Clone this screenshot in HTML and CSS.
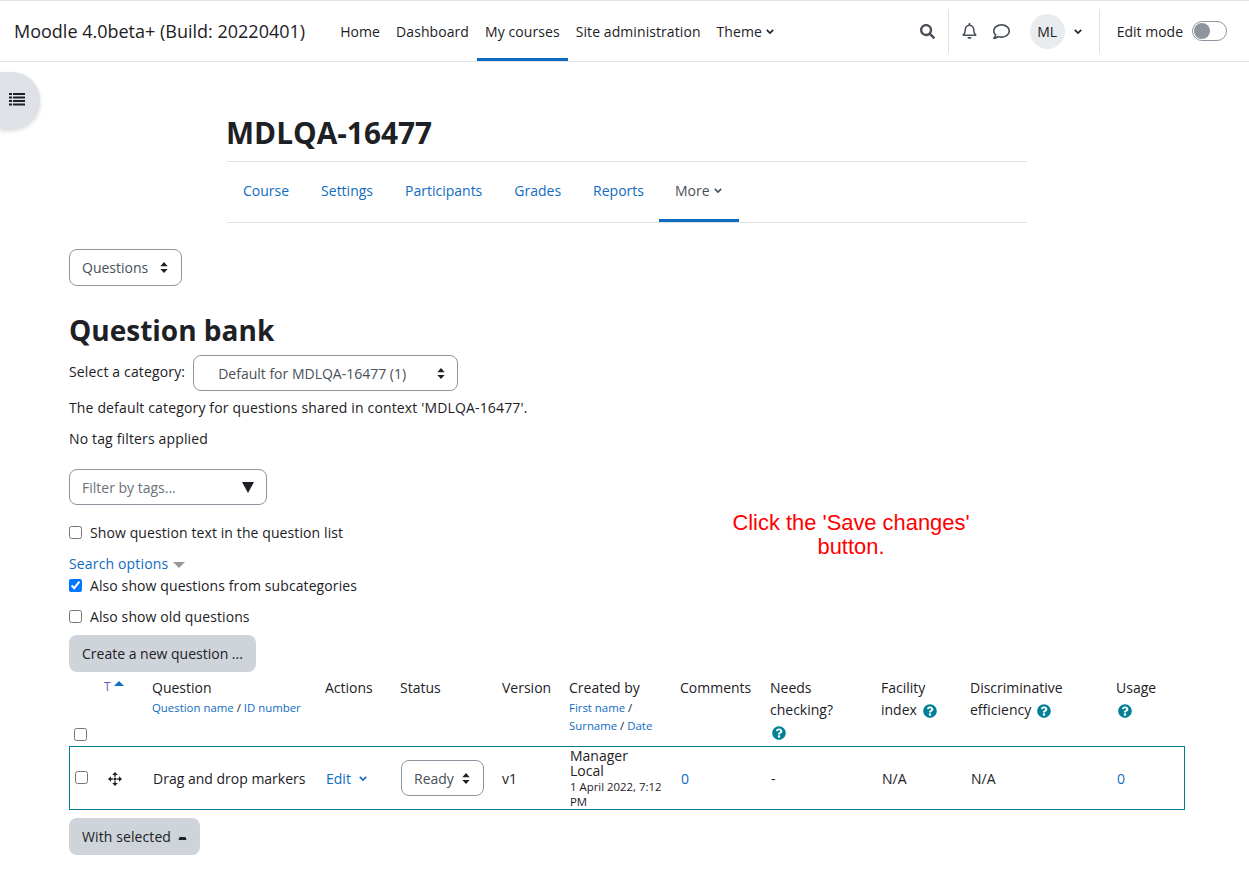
FILE: index.html
```html
<!DOCTYPE html>
<html lang="en">
<head>
  <meta charset="UTF-8" />
  <title>Question bank</title>
  <link rel="stylesheet" href="styles.css">
</head>
<body>

<nav class="navbar">
  <span class="brand">Moodle 4.0beta+ (Build: 20220401)</span>
  <ul class="nav-links">
    <li>Home</li>
    <li>Dashboard</li>
    <li class="active">My courses</li>
    <li>Site administration</li>
    <li>Theme <svg class="chev" viewBox="0 0 10 6"><path d="M1 1l4 4 4-4"/></svg></li>
  </ul>
  <div class="nav-right">
    <svg class="icon search-icon" viewBox="0 0 512 512"><path d="M505 442.7L405.3 343c-4.5-4.5-10.6-7-17-7H372c27.6-35.3 44-79.7 44-128C416 93.1 322.9 0 208 0S0 93.1 0 208s93.1 208 208 208c48.3 0 92.7-16.4 128-44v16.3c0 6.4 2.5 12.5 7 17l99.7 99.7c9.4 9.4 24.6 9.4 33.9 0l28.3-28.3c9.4-9.4 9.4-24.6.1-34zM208 336c-70.7 0-128-57.2-128-128 0-70.7 57.2-128 128-128 70.7 0 128 57.2 128 128 0 70.7-57.2 128-128 128z"/></svg>
    <span class="nav-sep sep-search"></span>
    <svg class="icon bell-icon" viewBox="0 0 448 512"><path d="M439.39 362.29c-19.32-20.76-55.47-51.99-55.47-154.29 0-77.7-54.48-139.9-127.94-155.16V32c0-17.67-14.32-32-31.98-32s-31.98 14.33-31.98 32v20.84C118.56 68.1 64.08 130.3 64.08 208c0 102.3-36.15 133.53-55.47 154.29-6 6.45-8.66 14.16-8.61 21.71.11 16.4 12.98 32 32.1 32h383.8c19.12 0 32-15.6 32.1-32 .05-7.55-2.61-15.27-8.61-21.71zM67.53 368c21.22-27.97 44.42-74.33 44.53-159.42 0-.2-.06-.38-.06-.58 0-61.86 50.14-112 112-112s112 50.14 112 112c0 .2-.06.38-.06.58.11 85.1 23.31 131.46 44.53 159.42H67.53zM224 512c35.32 0 63.97-28.65 63.97-64H160.03c0 35.35 28.65 64 63.97 64z"/></svg>
    <svg class="icon comment-icon" viewBox="0 0 512 512"><path d="M256 32C114.6 32 0 125.1 0 240c0 47.6 19.9 91.2 52.9 126.3C38 405.7 7 439.1 6.5 439.5c-6.6 7-8.4 17.2-4.6 26S14.4 480 24 480c61.5 0 110-25.7 139.1-46.3C192 442.8 223.2 448 256 448c141.4 0 256-93.1 256-208S397.4 32 256 32zm0 368c-26.7 0-53.1-4.1-78.4-12.1l-22.7-7.2-19.5 13.8c-14.3 10.1-33.9 21.4-57.5 29 7.3-12.1 14.4-25.7 19.9-40.2l10.6-28.1-20.6-21.8C69.7 314.1 48 282.2 48 240c0-88.2 93.3-160 208-160s208 71.8 208 160-93.3 160-208 160z"/></svg>
    <span class="avatar">ML</span>
    <svg class="chev user-chev" viewBox="0 0 10 6"><path d="M1 1l4 4 4-4"/></svg>
    <span class="nav-sep sep-user"></span>
    <span class="edit-label">Edit mode</span>
    <span class="toggle"><span class="knob"></span></span>
  </div>
</nav>

<button class="drawer-toggle" aria-label="Open course index">
  <svg viewBox="0 0 16 14"><path d="M0 1h3v2H0zM4 1h12v2H4zM0 4.500h3v2H0zM4 4.500h12v2H4zM0 8h3v2H0zM4 8h12v2H4zM0 11.500h3v2H0zM4 11.500h12v2H4z"/></svg>
</button>

<div class="course-head">
  <h1>MDLQA-16477</h1>
  <ul class="tabs">
    <li>Course</li>
    <li>Settings</li>
    <li>Participants</li>
    <li>Grades</li>
    <li>Reports</li>
    <li class="active">More <svg class="chev" viewBox="0 0 10 6"><path d="M1 1l4 4 4-4"/></svg></li>
  </ul>
</div>

<main class="content">
  <span class="select select-questions">Questions
    <svg class="updown" viewBox="0 0 8 12"><path d="M4 0l4 4.500H0zM4 12L0 7.500h8z"/></svg>
  </span>

  <h2>Question bank</h2>

  <div class="category-row">
    <label>Select a category:</label>
    <span class="select select-category">Default for MDLQA-16477 (1)
      <svg class="updown" viewBox="0 0 8 12"><path d="M4 0l4 4.500H0zM4 12L0 7.500h8z"/></svg>
    </span>
  </div>
  <p class="info">The default category for questions shared in context 'MDLQA-16477'.</p>
  <p class="info tags-info">No tag filters applied</p>

  <div class="filter-tags">
    <span>Filter by tags...</span>
    <svg viewBox="0 0 12 11"><path d="M0 0h12L6 11z"/></svg>
  </div>

  <label class="check check-text"><input type="checkbox"> Show question text in the question list</label>
  <div class="search-options"><a href="#">Search options</a> <span class="caret"></span></div>
  <label class="check check-sub"><input type="checkbox" checked> Also show questions from subcategories</label>
  <label class="check check-old"><input type="checkbox"> Also show old questions</label>

  <button class="btn">Create a new question ...</button>

  <table class="qbank">
    <colgroup>
      <col class="c-check"><col class="c-type"><col class="c-name"><col class="c-actions"><col class="c-status"><col class="c-version"><col class="c-created"><col class="c-comments"><col class="c-needs"><col class="c-facility"><col class="c-disc"><col class="c-usage">
    </colgroup>
    <thead>
      <tr>
        <th class="head-check"><input type="checkbox"></th>
        <th class="head-type"><a href="#" class="visited">T</a><span class="sort-up"></span></th>
        <th>Question<small><a href="#">Question name</a> / <a href="#">ID number</a></small></th>
        <th>Actions</th>
        <th>Status</th>
        <th>Version</th>
        <th>Created by<small><a href="#">First name</a> / <a href="#">Surname</a> / <a href="#">Date</a></small></th>
        <th>Comments</th>
        <th>Needs checking?
          <svg class="help help-block" viewBox="0 0 512 512"><path d="M504 256c0 136.997-111.043 248-248 248S8 392.997 8 256C8 119.083 119.043 8 256 8s248 111.083 248 248zM262.655 90c-54.497 0-89.255 22.957-116.549 63.758-3.536 5.286-2.353 12.415 2.715 16.258l34.699 26.31c5.205 3.947 12.621 3.008 16.665-2.122 17.864-22.658 30.113-35.797 57.303-35.797 20.429 0 45.698 13.148 45.698 32.958 0 14.976-12.363 22.667-32.534 33.976C247.128 238.528 216 254.941 216 296v4c0 6.627 5.373 12 12 12h56c6.627 0 12-5.373 12-12v-1.333c0-28.462 83.186-29.647 83.186-106.667 0-58.002-60.165-102-116.531-102zM256 338c-25.365 0-46 20.635-46 46 0 25.364 20.635 46 46 46s46-20.636 46-46c0-25.365-20.635-46-46-46z"/></svg>
        </th>
        <th>Facility index
          <svg class="help" viewBox="0 0 512 512"><path d="M504 256c0 136.997-111.043 248-248 248S8 392.997 8 256C8 119.083 119.043 8 256 8s248 111.083 248 248zM262.655 90c-54.497 0-89.255 22.957-116.549 63.758-3.536 5.286-2.353 12.415 2.715 16.258l34.699 26.31c5.205 3.947 12.621 3.008 16.665-2.122 17.864-22.658 30.113-35.797 57.303-35.797 20.429 0 45.698 13.148 45.698 32.958 0 14.976-12.363 22.667-32.534 33.976C247.128 238.528 216 254.941 216 296v4c0 6.627 5.373 12 12 12h56c6.627 0 12-5.373 12-12v-1.333c0-28.462 83.186-29.647 83.186-106.667 0-58.002-60.165-102-116.531-102zM256 338c-25.365 0-46 20.635-46 46 0 25.364 20.635 46 46 46s46-20.636 46-46c0-25.365-20.635-46-46-46z"/></svg>
        </th>
        <th>Discriminative efficiency
          <svg class="help" viewBox="0 0 512 512"><path d="M504 256c0 136.997-111.043 248-248 248S8 392.997 8 256C8 119.083 119.043 8 256 8s248 111.083 248 248zM262.655 90c-54.497 0-89.255 22.957-116.549 63.758-3.536 5.286-2.353 12.415 2.715 16.258l34.699 26.31c5.205 3.947 12.621 3.008 16.665-2.122 17.864-22.658 30.113-35.797 57.303-35.797 20.429 0 45.698 13.148 45.698 32.958 0 14.976-12.363 22.667-32.534 33.976C247.128 238.528 216 254.941 216 296v4c0 6.627 5.373 12 12 12h56c6.627 0 12-5.373 12-12v-1.333c0-28.462 83.186-29.647 83.186-106.667 0-58.002-60.165-102-116.531-102zM256 338c-25.365 0-46 20.635-46 46 0 25.364 20.635 46 46 46s46-20.636 46-46c0-25.365-20.635-46-46-46z"/></svg>
        </th>
        <th>Usage
          <svg class="help help-block" viewBox="0 0 512 512"><path d="M504 256c0 136.997-111.043 248-248 248S8 392.997 8 256C8 119.083 119.043 8 256 8s248 111.083 248 248zM262.655 90c-54.497 0-89.255 22.957-116.549 63.758-3.536 5.286-2.353 12.415 2.715 16.258l34.699 26.31c5.205 3.947 12.621 3.008 16.665-2.122 17.864-22.658 30.113-35.797 57.303-35.797 20.429 0 45.698 13.148 45.698 32.958 0 14.976-12.363 22.667-32.534 33.976C247.128 238.528 216 254.941 216 296v4c0 6.627 5.373 12 12 12h56c6.627 0 12-5.373 12-12v-1.333c0-28.462 83.186-29.647 83.186-106.667 0-58.002-60.165-102-116.531-102zM256 338c-25.365 0-46 20.635-46 46 0 25.364 20.635 46 46 46s46-20.636 46-46c0-25.365-20.635-46-46-46z"/></svg>
        </th>
      </tr>
    </thead>
    <tbody>
      <tr>
        <td><input type="checkbox"></td>
        <td class="move-cell">
          <svg class="move" viewBox="0 0 16 16"><path d="M8 0l3.200 3.400H4.800zM8 16l-3.200-3.400h6.400zM0 8l3.400-3.200v6.400zM16 8l-3.400 3.200V4.800z"/><circle cx="8" cy="8" r="1.800"/><path d="M7.200 3h1.600v2.500H7.200zM7.200 10.500h1.600V13H7.200zM3 7.200h2.500v1.600H3zM10.500 7.200H13v1.600h-2.500z"/></svg>
        </td>
        <td>Drag and drop markers</td>
        <td><a href="#">Edit</a> <svg class="chev edit-chev" viewBox="0 0 10 6"><path d="M1 1l4 4 4-4"/></svg></td>
        <td>
          <span class="select select-status">Ready
            <svg class="updown" viewBox="0 0 8 12"><path d="M4 0l4 4.500H0zM4 12L0 7.500h8z"/></svg>
          </span>
        </td>
        <td class="version">v1</td>
        <td class="creator">Manager<br>Local<small>1 April 2022, 7:12 PM</small></td>
        <td><a href="#">0</a></td>
        <td>-</td>
        <td>N/A</td>
        <td>N/A</td>
        <td><a href="#">0</a></td>
      </tr>
    </tbody>
  </table>

  <button class="btn btn-selected">With selected <svg class="caret-dash" viewBox="0 0 8 3"><path d="M0 3l1-3h6l1 3z"/></svg></button>
</main>

<div class="callout">Click the 'Save changes' button.</div>

</body>
</html>
```

FILE: styles.css
```css
* {
  box-sizing: border-box;
}

body {
  margin: 0;
  font-family: "Open Sans", "Noto Sans", sans-serif;
  font-size: 14px;
  line-height: 21px;
  color: #1d2125;
  background: #fff;
  border-top: 1px solid #dee2e6;
}

a {
  color: #0f6cbf;
  text-decoration: none;
}

ul {
  list-style: none;
  margin: 0;
  padding: 0;
}

.navbar {
  display: flex;
  align-items: stretch;
  height: 61px;
  padding-left: 14px;
  border-bottom: 1px solid #dee2e6;
}

.brand {
  align-self: center;
  font-size: 18px;
  margin-right: 27px;
  white-space: nowrap;
}

.nav-links {
  display: flex;
  letter-spacing: 0.08px;
}

.nav-links li {
  display: flex;
  align-items: center;
  gap: 4px;
  padding: 0 8px;
  border-bottom: 3px solid transparent;
  border-top: 3px solid transparent;
  white-space: nowrap;
}

.nav-links li.active {
  border-bottom-color: #0f6cbf;
}

.chev {
  width: 8px;
  height: 5px;
  fill: none;
  stroke: currentColor;
  stroke-width: 2;
}

.nav-right {
  display: flex;
  align-items: center;
  margin-left: auto;
  padding-right: 22px;
}

.icon {
  fill: #495057;
}

.search-icon {
  width: 15px;
  height: 15px;
}

.nav-sep {
  width: 1px;
  height: 44px;
  background: #dee2e6;
}

.sep-search {
  margin: 0 13px 0 13px;
}

.bell-icon {
  width: 15px;
  height: 16px;
}

.comment-icon {
  width: 17px;
  height: 17px;
  margin-left: 16px;
}

.avatar {
  display: flex;
  align-items: center;
  justify-content: center;
  width: 35px;
  height: 35px;
  margin-left: 20px;
  border-radius: 50%;
  background: #e9ecef;
}

.user-chev {
  margin-left: 9px;
}

.sep-user {
  margin: 0 17px 0 17px;
}

.toggle {
  position: relative;
  width: 35px;
  height: 20px;
  margin-left: 9px;
  border: 1px solid #8f959e;
  border-radius: 10px;
}

.knob {
  position: absolute;
  top: 1px;
  left: 1px;
  width: 16px;
  height: 16px;
  border-radius: 50%;
  background: #8f959e;
}

.drawer-toggle {
  position: absolute;
  top: 72px;
  left: 0;
  width: 40px;
  height: 57px;
  padding: 0 0 3px 0;
  border: 0;
  border-radius: 0 28px 28px 0;
  background: #dee2e6;
  box-shadow: 0 2px 4px rgba(0, 0, 0, 0.15);
}

.drawer-toggle svg {
  display: block;
  width: 16px;
  height: 14px;
  margin-left: 9px;
  fill: #1d2125;
}

.course-head {
  width: 800px;
  margin-left: 227px;
}

h1 {
  margin: 0;
  padding-top: 50px;
  height: 100px;
  font-size: 29.800px;
  line-height: 42px;
  font-weight: 700;
  text-indent: -1px;
  border-bottom: 1px solid #dee2e6;
}

.tabs {
  display: flex;
  height: 61px;
  border-bottom: 1px solid #dee2e6;
}

.tabs li {
  display: flex;
  align-items: center;
  gap: 4px;
  padding: 0 16px;
  color: #0f6cbf;
  border-bottom: 3px solid transparent;
}

.tabs li.active {
  margin-left: -1px;
  padding-right: 17px;
  color: #495057;
  border-bottom-color: #0f6cbf;
}

.content {
  padding: 26px 64px 0 69px;
}

.select {
  display: inline-flex;
  align-items: center;
  justify-content: space-between;
  height: 37px;
  padding: 0 13px 0 12px;
  color: #495057;
  border: 1px solid #8f959e;
  border-radius: 8px;
  background: #fff;
}

.updown {
  width: 8px;
  height: 11px;
  fill: #1d2125;
}

.select-questions {
  width: 113px;
}

h2 {
  margin: 26px 0 7px;
  font-size: 28px;
  line-height: 36px;
  font-weight: 700;
}

.category-row {
  display: flex;
  align-items: flex-start;
  gap: 8px;
}

.category-row label {
  line-height: 34px;
  letter-spacing: 0.15px;
}

.select-category {
  width: 265px;
  height: 36px;
  padding: 0 12px 0 24px;
}

.info {
  margin: 6px 0 0;
  letter-spacing: 0.15px;
}

.tags-info {
  margin-top: 10px;
}

.filter-tags {
  display: flex;
  align-items: center;
  justify-content: space-between;
  width: 198px;
  height: 36px;
  margin-top: 20px;
  padding: 0 12px;
  color: #6a737b;
  border: 1px solid #8f959e;
  border-radius: 8px;
}

.filter-tags svg {
  width: 12px;
  height: 11px;
  fill: #1d2125;
}

.check {
  display: flex;
  align-items: center;
  gap: 8px;
  letter-spacing: 0.1px;
}

.check input {
  margin: 0;
}

.check-text {
  margin-top: 17px;
}

.search-options {
  display: flex;
  align-items: center;
  gap: 5px;
  margin-top: 10px;
  letter-spacing: 0.15px;
}

.caret {
  width: 0;
  height: 0;
  margin-top: 2px;
  border-left: 6px solid transparent;
  border-right: 6px solid transparent;
  border-top: 6px solid #999;
}

.check-sub {
  margin-top: 1px;
}

.check-old {
  margin-top: 10px;
}

.btn {
  display: block;
  height: 37px;
  margin-top: 8px;
  padding: 0 13px;
  font: inherit;
  color: #1d2125;
  border: 0;
  border-radius: 8px;
  background: #ced4da;
}

.qbank {
  table-layout: fixed;
  width: 1116px;
  margin-top: 3px;
  border-collapse: collapse;
}

.c-check { width: 35px; }
.c-type { width: 48px; }
.c-name { width: 173px; }
.c-actions { width: 75px; }
.c-status { width: 102px; }
.c-version { width: 67px; }
.c-created { width: 111px; }
.c-comments { width: 90px; }
.c-needs { width: 111px; }
.c-facility { width: 89px; }
.c-disc { width: 146px; }
.c-usage { width: 69px; }

.qbank th {
  height: 71px;
  padding: 2px 8px 0 0;
  font-weight: 400;
  text-align: left;
  vertical-align: top;
  line-height: 22px;
}

.qbank small {
  display: block;
  font-size: 11.400px;
  line-height: 18px;
}

.qbank th.head-check {
  padding: 0 0 5px 5px;
  vertical-align: bottom;
}

.head-check input {
  display: block;
  margin: 0;
}

.qbank th.head-type {
  line-height: 18px;
  padding: 3px 0 0;
  font-size: 12px;
}

.visited {
  color: #6a5ab5;
}

.sort-up {
  display: inline-block;
  vertical-align: 5px;
  margin-left: 3px;
  border-left: 5px solid transparent;
  border-right: 5px solid transparent;
  border-bottom: 5px solid #0f6cbf;
}

.help {
  display: inline-block;
  width: 14px;
  height: 14px;
  margin-left: 2px;
  vertical-align: -3px;
  fill: #008196;
}

.help-block {
  display: block;
  margin-top: 5px;
}

.qbank tbody tr {
  outline: 1px solid #008196;
  outline-offset: -1px;
}

.qbank td {
  height: 64px;
  padding: 0 8px 0 1px;
  vertical-align: middle;
}

.qbank td:first-child {
  padding-left: 6px;
}

.qbank td.version {
  padding-left: 0;
}

.qbank td input {
  display: block;
  margin: 0 0 1px;
}

.move {
  display: block;
  width: 14px;
  height: 14px;
  margin: 2px 0 0 3px;
  fill: #1d2125;
}

.edit-chev {
  margin-left: 4px;
  vertical-align: 3px;
  color: #0f6cbf;
}

.select-status {
  width: 83px;
  height: 36px;
}

.qbank td.creator {
  line-height: 15px;
}

.qbank .creator small {
  margin-top: 1px;
  line-height: 15px;
}

.btn-selected {
  margin-top: 8px;
  letter-spacing: 0.1px;
}

.caret-dash {
  width: 9px;
  height: 3px;
  margin-left: 3px;
  vertical-align: 2px;
  fill: #1d2125;
}

.callout {
  position: absolute;
  top: 511px;
  left: 725px;
  width: 252px;
  font-family: "Liberation Sans", sans-serif;
  font-size: 21.900px;
  line-height: 24px;
  color: #f00;
  text-align: center;
}
```
